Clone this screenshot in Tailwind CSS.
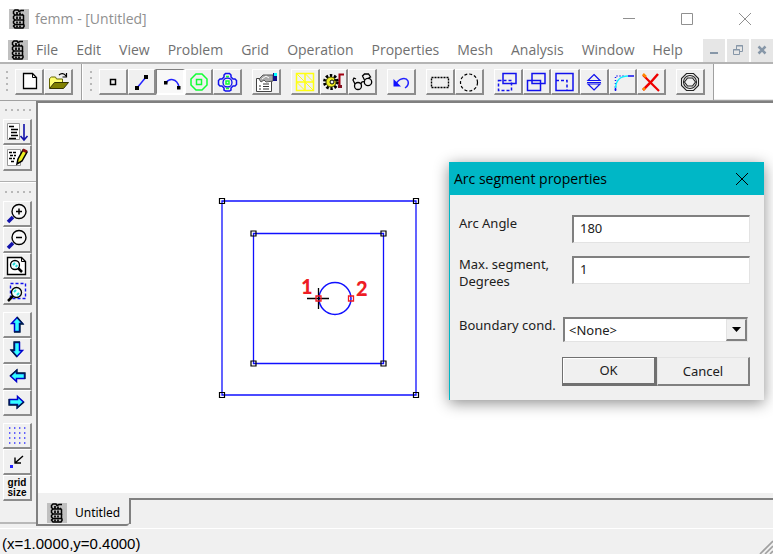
<!DOCTYPE html>
<html lang="en">
<head>
  <meta charset="UTF-8" />
  <meta name="viewport" content="width=device-width, initial-scale=1.0" />
  <title>femm - [Untitled]</title>
  <script src="https://cdn.jsdelivr.net/npm/@tailwindcss/browser@4"></script>
  <style>
    body { font-family: 'Open Sans', 'Noto Sans', sans-serif; }
    svg { flex-shrink: 0; }
  </style>
</head>
<body class="h-screen flex flex-col overflow-hidden bg-[#f0f0f0] text-black">

  <!-- shared drawings -->
  <svg class="hidden">
    <symbol id="logo" viewBox="0 0 20 20">
      <rect width="20" height="20" fill="#c0c0c0" />
      <g fill="none" stroke="#000" stroke-width="1.500">
        <path d="M15 1.500h-3l-2 1-1-1.500H6L4.500 2.500v2L6 6h8" />
        <path d="M6 6L4.500 7.500v2L6 11h8.500V6.500L13 5" />
        <path d="M6 11l-1.500 1.500v1.500L6 15.500h8.500V11" />
        <path d="M6 15.500L4.500 17l1.500 2h8l1-1.500v-2" />
        <path d="M8 3v3M11 3.500v2.500M8 7.500v2.500M11 7.500v2.500M8 12.500v2M11 12.500v2M8 16.500v2M11 16.500v2" stroke-width="1.700" />
      </g>
    </symbol>
    <symbol id="arrow" viewBox="0 0 24 22">
      <path d="M12 4.500L17.500 10.500H14.500V18.500H9.500V10.500H6.500Z" fill="#3ff" stroke="#00c" stroke-width="1.500" />
      <path d="M12 4l6 7h-3v8H9" fill="none" stroke="#002040" stroke-width="1.300" />
    </symbol>
  </svg>

  <!-- Title bar -->
  <header class="h-[38px] shrink-0 bg-white flex items-center pl-[9px] text-[#909090]">
    <svg class="w-5 h-5"><use href="#logo" /></svg>
    <h1 class="ml-[6px] text-[14px] leading-5">femm - [Untitled]</h1>
    <div class="ml-auto flex items-center gap-[46px] pr-[22px]">
      <button aria-label="Minimize"><svg class="block" width="12" height="12" fill="none" stroke="currentColor"><path d="M0 5.500h12" /></svg></button>
      <button aria-label="Maximize"><svg class="block" width="12" height="12" fill="none" stroke="currentColor"><path d="M.5.500h11v11H.500z" /></svg></button>
      <button aria-label="Close"><svg class="block" width="12" height="12" fill="none" stroke="currentColor"><path d="M0 0l12 12M12 0L0 12" /></svg></button>
    </div>
  </header>

  <!-- Menu bar -->
  <nav class="h-[24px] shrink-0 bg-white flex items-center pl-[8px] text-[14px] leading-5 text-[#707070]">
    <svg class="w-5 h-5"><use href="#logo" /></svg>
    <div class="ml-[8px] flex gap-[18px] whitespace-nowrap">
      <button>File</button>
      <button>Edit</button>
      <button>View</button>
      <button>Problem</button>
      <button>Grid</button>
      <button>Operation</button>
      <button>Properties</button>
      <button>Mesh</button>
      <button>Analysis</button>
      <button>Window</button>
      <button>Help</button>
    </div>
    <div class="ml-auto flex gap-[2px] text-[#8797a8] [&>button]:w-[22px] [&>button]:h-[23px] [&>button]:bg-[#e6e6e6] [&>button]:flex [&>button]:items-center [&>button]:justify-center">
      <button aria-label="Minimize document"><svg width="12" height="12"><path d="M2 9h8" stroke="currentColor" stroke-width="2" /></svg></button>
      <button aria-label="Restore document"><svg width="12" height="12" fill="none" stroke="currentColor"><path d="M1.500 5.500h6v5h-6zM1 6h7M4.500 5V1.500h6v6H8M4 2h7" /></svg></button>
      <button aria-label="Close document"><svg width="12" height="12"><path d="M2.500 2.500l7 7M9.500 2.500l-7 7" stroke="currentColor" stroke-width="2.500" /></svg></button>
    </div>
  </nav>

  <!-- Toolbar -->
  <div class="h-[39px] shrink-0 flex border-t-2 border-t-[#b4b4b4] border-b border-b-[#a0a0a0] bg-white">
    <div class="flex items-start pt-[5px] pl-[5px] pr-[8px] bg-[#f0f0f0] border-r border-[#a0a0a0]
      [&>div]:flex [&>div]:h-[26px]
      [&_button]:flex-1 [&_button]:flex [&_button]:justify-center [&_button]:bg-[#f0f0f0]
      [&_button]:border-t [&_button]:border-l [&_button]:border-r-2 [&_button]:border-b-2
      [&_button]:border-t-white [&_button]:border-l-white [&_button]:border-r-[#8c8c8c] [&_button]:border-b-[#8c8c8c]">
      <svg width="4" height="26"><path d="M2 2v24" stroke="#b8b8b8" stroke-width="2" stroke-dasharray="2 4" /></svg>
      <div class="ml-[6px] w-[58px]">
        <button aria-label="New">
          <svg width="24" height="22"><path d="M6.500 3.500h9l4 4v11h-13z" fill="#fff" stroke="#000" stroke-width="1.300" /><path d="M15.500 3.500v4h4" fill="none" stroke="#000" /></svg>
        </button>
        <button aria-label="Open">
          <svg width="24" height="22"><path d="M3.500 18V8.500l2-1.500h4l1 2h6v3" fill="#ffff70" stroke="#666600" /><path d="M3.500 18.500l5-6h14l-5 6z" fill="#808000" stroke="#333300" /><path d="M13 5c2-2 5-2 7 1M20.500 3v4h-4" fill="none" stroke="#000" stroke-width="1.200" /></svg>
        </button>
      </div>
      <span class="ml-[8px] -mt-[5px] h-[36px] w-[2px] bg-[#a0a0a0] border-r border-white"></span>
      <svg class="ml-[6px]" width="4" height="26"><path d="M2 2v24" stroke="#b8b8b8" stroke-width="2" stroke-dasharray="2 4" /></svg>
      <div class="ml-[6px] w-[143px]">
        <button aria-label="Operate on nodes">
          <svg width="24" height="22"><path d="M9.500 9.500h5v5h-5z" fill="none" stroke="#000" stroke-width="1.500" /></svg>
        </button>
        <button aria-label="Operate on segments">
          <svg width="24" height="22"><path d="M8 18l9-11" stroke="#22f" stroke-width="1.500" /><path d="M6 16h4v4H6zM15 5h4v4h-4z" /></svg>
        </button>
        <button aria-label="Operate on arc segments" aria-pressed="true" class="border-t-[#808080]! border-l-[#808080]! border-r-white! border-b-white! bg-[#f8f8f8]!">
          <svg width="24" height="22"><path d="M8 13C11 8 19 8 21 17" fill="none" stroke="#22f" stroke-width="1.500" /><path d="M6 11h3.500v3.500H6zM19 16h3.500v3.500H19z" /></svg>
        </button>
        <button aria-label="Operate on block labels">
          <svg width="24" height="22" fill="none" stroke="#1f3" stroke-width="1.500"><path d="M9 4h6l5 5v6l-5 5H9l-5-5V9z" /><path d="M9.500 9.500h5v5h-5z" /></svg>
        </button>
        <button aria-label="Operate on groups">
          <svg width="24" height="22" fill="none" stroke="#11e" stroke-width="1.500"><path d="M9 7V5l1.500-1.500h4L16 5v2l2 2h2l1.500 1.500v4L20 16h-2l-2 2v2l-1.500 1h-4L9 20v-2l-2-2H5l-1.500-1.500v-4L5 9h2z" /><circle cx="12.500" cy="12.500" r="4.500" stroke-width="1.300" /><path d="M11 11h3v3h-3z" stroke="#1f3" /><path d="M11 6.500h3M11 18.500h3" stroke="#1f3" /></svg>
        </button>
      </div>
      <div class="ml-[10px] w-[29px]">
        <button aria-label="Open properties">
          <svg width="24" height="22"><path d="M2.500 8.500h15v13h-15z" fill="#fff" stroke="#444" /><path d="M5 16h2M5 19h2M9 14h6M9 16.500h6M9 19h6" stroke="#333" /><path d="M5 9l4-4h10v6l-7 1-2-2-3 2z" fill="#aaa" stroke="#555" /><path d="M8 9l4-3 3 2" fill="none" stroke="#fff" /><path d="M19 3h4v8h-4z" fill="#118" /><path d="M20 3h3v3h-3z" fill="#0ff" /></svg>
        </button>
      </div>
      <div class="ml-[10px] w-[86px]">
        <button aria-label="Run mesh generator">
          <svg width="24" height="22" fill="none" stroke="#ff1" stroke-width="1.300"><path d="M3.500 3.500h17v17h-17zM12 3v18M3 12h18" stroke-width="1.500" /><path d="M3.500 3.500L12 12l8.500 8.500M12 3.500l8.500 8.500M3.500 12l8.500 8.500" stroke-width="1" /></svg>
        </button>
        <button aria-label="Run analysis">
          <svg width="24" height="22"><circle cx="9" cy="12" r="6.500" fill="none" stroke="#000" stroke-width="3" stroke-dasharray="2.400 1.700" /><circle cx="9" cy="12" r="5" fill="#ee2" stroke="#440" stroke-width="1" /><circle cx="10" cy="12" r="2" fill="#f0f0f0" stroke="#000" /><path d="M12 10h4" stroke="#000" stroke-width="1.500" /><path d="M22 4.500h-4.500V15" fill="none" stroke="#a00010" stroke-width="2" /><path d="M16 15h4v3h-4z" fill="#801020" /></svg>
        </button>
        <button aria-label="View results">
          <svg width="24" height="22" fill="none" stroke="#000" stroke-width="1.300"><circle cx="8" cy="16" r="3.500" /><circle cx="18" cy="12" r="3.700" /><path d="M5 14L3 10l1-2 2 1M11 14c0-2 2-3 4-2M14.500 10l-2-4 2-2h4l2 3-2 1" /></svg>
        </button>
      </div>
      <div class="ml-[10px] w-[29px]">
        <button aria-label="Undo">
          <svg width="24" height="22"><path d="M7 14c3-6 10-7 12-3 1 3 0 5-3 7" fill="none" stroke="#22f" stroke-width="1.500" /><path d="M4.500 9v7.500H12z" fill="#11f" /></svg>
        </button>
      </div>
      <div class="ml-[10px] w-[58px]">
        <button aria-label="Select rectangle">
          <svg width="24" height="22"><path d="M3.500 7.500h17v10h-17z" fill="none" stroke="#000" stroke-width="1.400" stroke-dasharray="2 1" /></svg>
        </button>
        <button aria-label="Select circle">
          <svg width="24" height="22"><circle cx="12" cy="12.500" r="8.500" fill="none" stroke="#000" stroke-width="1.200" stroke-dasharray="3 2" /></svg>
        </button>
      </div>
      <div class="ml-[10px] w-[172px]">
        <button aria-label="Move">
          <svg width="24" height="22" fill="none" stroke="#11e" stroke-width="1.500"><path d="M7 3.500h13v10H7z" /><path d="M2.500 10.500h13v10h-13z" stroke-dasharray="3 2" /></svg>
        </button>
        <button aria-label="Copy">
          <svg width="24" height="22" fill="none" stroke="#11e" stroke-width="1.500"><path d="M7 3.500h13v10H7z" /><path d="M2.500 10.500h13v10h-13z" /></svg>
        </button>
        <button aria-label="Scale">
          <svg width="24" height="22" fill="none" stroke="#11e" stroke-width="1.500"><path d="M3 3.500h17v17H3z" /><path d="M3 10.500h11v10" stroke-dasharray="3 2" /></svg>
        </button>
        <button aria-label="Mirror">
          <svg width="24" height="22" fill="none" stroke="#11e" stroke-width="1.200"><path d="M12 4.500l6 6H6zM12 20l6-6H6zM5 12.500h14" /></svg>
        </button>
        <button aria-label="Fillet">
          <svg width="24" height="22" fill="none" stroke-width="1.500"><path d="M4.500 20V6h8" stroke="#11e" stroke-dasharray="1 2" /><path d="M4.500 21v-4M17 6h6" stroke="#11e" /><path d="M4.500 18C5 10 10 6 17 6" stroke="#1ef" /></svg>
        </button>
        <button aria-label="Delete">
          <svg width="24" height="22" fill="none"><path d="M4 5l5 5 7 7 4 4" stroke="#e00" stroke-width="2.200" /><path d="M19 4l-7 8-8 8" stroke="#e00" stroke-width="2.500" /><path d="M4 4l3 3M4 20l2-2" stroke="#f80" stroke-width="2.500" /></svg>
        </button>
      </div>
      <div class="ml-[10px] w-[29px]">
        <button aria-label="Open boundary">
          <svg width="24" height="22" fill="none" stroke="#222" stroke-width="1.100"><path d="M8.500 3.500h7l5 5v7l-5 5h-7l-5-5v-7z" /><circle cx="12" cy="12" r="6.500" /><path d="M9.500 8h5l3 4-3 4h-5l-3-4z" /></svg>
        </button>
      </div>
    </div>
    <span class="flex-1 border-b border-[#e8e8e8]"></span>
  </div>

  <main class="flex-1 min-h-0 flex relative">
    <!-- Side toolbar -->
    <aside class="w-[36px] shrink-0 mb-[4px] border-b-2 border-[#b8b8b8] flex flex-col
      [&>div]:ml-[3px] [&>div]:w-[29px]
      [&_button]:w-full [&_button]:h-[26px] [&_button]:flex [&_button]:justify-center
      [&_button]:border-t [&_button]:border-l [&_button]:border-r-2 [&_button]:border-b-2
      [&_button]:border-t-white [&_button]:border-l-white [&_button]:border-r-[#8c8c8c] [&_button]:border-b-[#8c8c8c]">
      <svg class="mt-[7px] ml-[5px]" width="27" height="4"><path d="M0 2h27" stroke="#b8b8b8" stroke-width="2" stroke-dasharray="2 4" /></svg>
      <div class="mt-[7px]">
        <button aria-label="Lua script">
          <svg width="24" height="22"><path d="M2.500 3.500h12v16h-12z" fill="#fff" stroke="#999" /><path d="M4 6.500h5M6 9.500h7M6 12.500h6M6 15.500h7M4 18.500h7" stroke="#000" stroke-width="1.400" /><path d="M19 4v16M15.500 16l3.500 4 3.500-4" fill="none" stroke="#11a" stroke-width="1.600" /></svg>
        </button>
        <button aria-label="Edit script">
          <svg width="24" height="22"><path d="M2.500 3.500h13v16h-13z" fill="#fff" stroke="#999" /><path d="M4 6.500h8M5 9.500h6M4 12.500h6M6 15.500h4" stroke="#000" stroke-width="1.500" stroke-dasharray="3 1" /><path d="M12 18l1-5 5-9 4 2-5 9z" fill="#ee2" stroke="#000" stroke-width="1.500" /><path d="M17 5l1.500-2.500 4 2L21 7z" fill="#811" /></svg>
        </button>
      </div>
      <span class="mt-[10px] h-[2px] w-full bg-[#b0b0b0] border-b border-white"></span>
      <svg class="mt-[7px] ml-[5px]" width="27" height="4"><path d="M0 2h27" stroke="#b8b8b8" stroke-width="2" stroke-dasharray="2 4" /></svg>
      <div class="mt-[7px]">
        <button aria-label="Zoom in">
          <svg width="24" height="22" fill="none"><path d="M8 15l-5 5" stroke="#11a" stroke-width="3.500" /><circle cx="14" cy="9.500" r="7" fill="#f8f8f8" stroke="#000" stroke-width="1.400" /><path d="M11 9.500h6M14 6.500v6" stroke="#000" stroke-width="1.500" /></svg>
        </button>
        <button aria-label="Zoom out">
          <svg width="24" height="22" fill="none"><path d="M8 15l-5 5" stroke="#11a" stroke-width="3.500" /><circle cx="14" cy="9.500" r="7" fill="#f8f8f8" stroke="#000" stroke-width="1.400" /><path d="M11 9.500h6" stroke="#000" stroke-width="1.500" /></svg>
        </button>
        <button aria-label="Zoom to page">
          <svg width="24" height="22" fill="none"><path d="M2.500 3.500h14l4 4v13h-18z" fill="#fff" stroke="#000" stroke-width="1.400" /><path d="M16.500 3.500v4h4" stroke="#000" /><circle cx="10" cy="11" r="4.500" fill="#efffff" stroke="#000" stroke-width="1.300" /><path d="M13 14l4 4" stroke="#000" stroke-width="2.500" /><path d="M8 11l2-2M11 13l1-2" stroke="#2dd" stroke-width="2" /></svg>
        </button>
        <button aria-label="Zoom window">
          <svg width="24" height="22" fill="none"><path d="M5.500 3.500h15v15h-15z" stroke="#11e" stroke-width="1.400" stroke-dasharray="3 2" /><path d="M8 16l-5 5" stroke="#000" stroke-width="2.500" /><circle cx="11.500" cy="12.500" r="5" fill="#efffff" stroke="#000" stroke-width="1.300" /><path d="M9 12l2-2M12 15l2-2" stroke="#2dd" stroke-width="2" /></svg>
        </button>
      </div>
      <div class="mt-[7px]">
        <button aria-label="Pan up"><svg class="w-6 h-[22px]"><use href="#arrow" /></svg></button>
        <button aria-label="Pan down"><svg class="w-6 h-[22px] rotate-180"><use href="#arrow" /></svg></button>
        <button aria-label="Pan left"><svg class="w-6 h-[22px] -rotate-90"><use href="#arrow" /></svg></button>
        <button aria-label="Pan right"><svg class="w-6 h-[22px] rotate-90"><use href="#arrow" /></svg></button>
      </div>
      <div class="mt-[7px]">
        <button aria-label="Show grid">
          <svg width="24" height="22"><path d="M4 4h17M4 9h17M4 14h17M4 19h17" stroke="#33f" stroke-width="1.400" stroke-dasharray="1.400 3.600" /></svg>
        </button>
        <button aria-label="Snap to grid">
          <svg width="24" height="22"><path d="M5 15h3v3H5z" fill="#22f" /><path d="M18 6l-8 7M10 7.500V13h6" fill="none" stroke="#000" stroke-width="1.400" /></svg>
        </button>
        <button class="flex-col items-center font-['Liberation_Sans'] font-bold text-[10px] leading-[10px]"><span>grid</span><span>size</span></button>
      </div>
    </aside>

    <!-- Document -->
    <section class="flex-1 min-w-0 flex flex-col">
      <div class="flex-1 min-h-0 bg-white border-t-2 border-l-2 border-[#808080]">
        <svg class="block w-full h-full" fill="none">
          <g stroke="#1010ff" stroke-width="1.300">
            <path d="M184 98h194v194H184zM215.500 130.500h130v130h-130z" />
            <circle cx="297" cy="195.500" r="16" stroke-width="1.500" />
          </g>
          <path d="M269 195.500h22M280.500 185v21" stroke="#000" stroke-width="1.300" />
          <g stroke="#000" stroke-width="1.200">
            <path d="M181.500 95.500h5v5h-5zM375.500 95.500h5v5h-5zM181.500 289.500h5v5h-5zM375.500 289.500h5v5h-5z" />
            <path d="M213 128h5v5h-5zM343 128h5v5h-5zM213 258h5v5h-5zM343 258h5v5h-5z" />
          </g>
          <path d="M278 193h5v5h-5zM310.500 193h5v5h-5z" stroke="#f01820" stroke-width="1.300" />
          <g class="font-['Lato'] font-black text-[20px]" fill="#ee1c24">
            <text x="263" y="191">1</text>
            <text x="318" y="193">2</text>
          </g>
        </svg>
      </div>
      <div class="h-[33px] shrink-0 flex border-l-2 border-[#808080]">
        <button class="w-[91px] flex items-center pl-[9px] pt-[9px] border-b-2 border-[#808080] rounded-br-[3px]">
          <svg class="w-5 h-5"><use href="#logo" /></svg>
          <span class="ml-[8px] font-['Noto_Sans'] text-[12px] leading-4">Untitled</span>
        </button>
        <span class="flex-1 mt-[5px] mb-[2px] border-t-2 border-l-2 border-[#808080]"></span>
      </div>
      <div class="h-[2px] shrink-0"></div>
    </section>

    <!-- Arc segment dialog -->
    <form class="absolute top-[61px] right-[9px] w-[315px] h-[238px] bg-[#f0f0f0] shadow-[0_3px_14px_rgba(0,0,0,0.45)] text-[13px] leading-[17px] font-['Noto_Sans']">
      <div class="h-[33px] bg-[#00b7c6] flex items-center justify-between pl-[5px] pr-[16px] font-['Open_Sans'] text-[14px]">
        <h2>Arc segment properties</h2>
        <button type="button" aria-label="Close dialog"><svg class="block" width="12" height="12" fill="none" stroke="#000"><path d="M0 0l12 12M12 0L0 12" /></svg></button>
      </div>
      <div class="border-l border-[#00b7c6] h-[205px] pl-[9px] pr-[14px] text-[#202020]">
        <div class="pt-[20px] flex justify-between">
          <label for="angle">Arc Angle</label>
          <input id="angle" value="180" class="w-[178px] h-[28px] pl-[6px] pb-[4px] bg-white border-t-2 border-l-2 border-r border-b border-t-[#808080] border-l-[#808080] border-r-[#e3e3e3] border-b-[#e3e3e3]" />
        </div>
        <div class="pt-[13px] flex justify-between">
          <label for="maxseg">Max. segment,<br />Degrees</label>
          <input id="maxseg" value="1" class="w-[178px] h-[28px] pl-[6px] pb-[4px] bg-white border-t-2 border-l-2 border-r border-b border-t-[#808080] border-l-[#808080] border-r-[#e3e3e3] border-b-[#e3e3e3]" />
        </div>
        <div class="pt-[27px] flex justify-between">
          <label for="boundary">Boundary cond.</label>
          <div class="relative w-[185px] mr-[2px]">
            <select id="boundary" class="appearance-none block w-full h-[25px] pl-[4px] bg-white border-t-2 border-l-2 border-r border-b border-t-[#808080] border-l-[#808080] border-r-[#e3e3e3] border-b-[#e3e3e3]">
              <option>&lt;None&gt;</option>
            </select>
            <span class="absolute top-[2px] right-[1px] w-[21px] h-[22px] bg-[#f0f0f0] border-t border-l border-r-2 border-b-2 border-t-[#e3e3e3] border-l-[#e3e3e3] border-r-[#808080] border-b-[#808080] flex items-center justify-center pointer-events-none">
              <svg width="9" height="5"><path d="M0 0h9L4.500 5z" /></svg>
            </span>
          </div>
        </div>
        <div class="pt-[15px] flex justify-end">
          <button type="button" class="w-[95px] h-[29px] border-t border-l border-r-[3px] border-b-[3px] border-[#707070] shadow-[inset_1px_1px_0_white]">OK</button>
          <button type="button" class="w-[93px] h-[29px] border-t border-l border-r-2 border-b-2 border-t-[#e3e3e3] border-l-[#e3e3e3] border-r-[#808080] border-b-[#808080]">Cancel</button>
        </div>
      </div>
    </form>
  </main>

  <!-- Status bar -->
  <footer class="h-[26px] shrink-0 border-t border-white flex items-center justify-between pl-[2px] pt-[4px] font-['Liberation_Sans'] text-[15px] leading-5">
    <span>(x=1.0000,y=0.4000)</span>
    <svg class="self-end" width="14" height="14"><path d="M1 14L14 1M6 14l8-8M11 14l3-3" stroke="#a0a0a0" stroke-width="1.600" /></svg>
  </footer>
</body>
</html>
